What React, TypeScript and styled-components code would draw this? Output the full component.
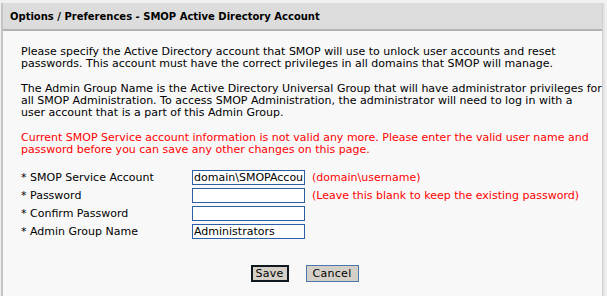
import React from 'react';
import styled, { createGlobalStyle } from 'styled-components';

const GlobalStyle = createGlobalStyle`
  html, body {
    margin: 0;
    padding: 0;
    background: #f0f0f0;
  }
  body {
    font-family: "DejaVu Sans", Verdana, sans-serif;
    font-size: 11px;
  }
`;

const Page = styled.div`
  width: 607px;
  height: 296px;
  box-sizing: border-box;
  padding: 3px 4px 0 1px;
  display: flex;
`;

const Panel = styled.div`
  flex: 1;
  display: flex;
  flex-direction: column;
  background: #f8f8f8;
  border-left: 2px solid #c4c4c4;
  border-right: 1px solid #d0d0d0;
  box-shadow: 2px 0 0 #e4e4e4;
`;

const Header = styled.div`
  height: 28px;
  box-sizing: border-box;
  display: flex;
  align-items: center;
  padding-left: 7px;
  background: #dcdcdc;
  border-bottom: 2px solid #b2b2b2;
  color: #000;
  font-weight: bold;
  font-size: 10px;
`;

const Body = styled.div`
  padding: 15px 0 0 18px;
  color: #000;
`;

const Para = styled.p<{ $alert?: boolean; $gap?: number }>`
  margin: 0 0 ${(p) => p.$gap ?? 13}px 0;
  line-height: 12px;
  white-space: nowrap;
  color: ${(p) => (p.$alert ? '#ff0000' : '#000')};
`;

const FormGrid = styled.div`
  display: grid;
  grid-template-columns: 164px 113px auto;
  column-gap: 7px;
  row-gap: 3px;
  align-items: center;
  margin-top: 14px;
`;

const Label = styled.span`
  line-height: 15px;
  white-space: nowrap;
`;

const Field = styled.input`
  box-sizing: border-box;
  width: 113px;
  height: 15px;
  margin: 0;
  padding: 0 1px;
  border: 1px solid #2c5fa4;
  background: #fff;
  font-family: "DejaVu Sans", Verdana, sans-serif;
  font-size: 11px;
  color: #000;
  outline: none;
`;

const Hint = styled.span`
  color: #ff0000;
  line-height: 15px;
  white-space: nowrap;
`;

const Actions = styled.div`
  display: flex;
  justify-content: center;
  gap: 17px;
  margin-top: 26px;
  padding-right: 14px;
`;

const Button = styled.button<{ $primary?: boolean }>`
  width: ${(p) => (p.$primary ? '38px' : '53px')};
  height: 17px;
  box-sizing: border-box;
  padding: 0;
  background: #d4d0c8;
  border: ${(p) => (p.$primary ? '2px solid #101820' : '1px solid #4a78ad')};
  font-family: "DejaVu Sans", Verdana, sans-serif;
  font-size: 11px;
  color: #000;
  letter-spacing: 0.3px;
  line-height: 13px;
`;

const fields = [
  { label: 'SMOP Service Account', value: 'domain\\SMOPAccount', hint: '(domain\\username)' },
  { label: 'Password', value: '', hint: '(Leave this blank to keep the existing password)', type: 'password' },
  { label: 'Confirm Password', value: '', type: 'password' },
  { label: 'Admin Group Name', value: 'Administrators' },
];

export default function App() {
  return (
    <>
      <GlobalStyle />
      <Page>
        <Panel>
          <Header>Options / Preferences - SMOP Active Directory Account</Header>
          <Body>
            <Para $gap={13}>
              Please specify the Active Directory account that SMOP will use to unlock user accounts and reset
              <br />
              passwords. This account must have the correct privileges in all domains that SMOP will manage.
            </Para>
            <Para $gap={13}>
              The Admin Group Name is the Active Directory Universal Group that will have administrator privileges for
              <br />
              all SMOP Administration. To access SMOP Administration, the administrator will need to log in with a
              <br />
              user account that is a part of this Admin Group.
            </Para>
            <Para $alert $gap={0}>
              Current SMOP Service account information is not valid any more. Please enter the valid user name and
              <br />
              password before you can save any other changes on this page.
            </Para>
            <FormGrid>
              {fields.map((f) => (
                <React.Fragment key={f.label}>
                  <Label>* {f.label}</Label>
                  <Field type={f.type || 'text'} defaultValue={f.value} />
                  <Hint>{f.hint || ''}</Hint>
                </React.Fragment>
              ))}
            </FormGrid>
            <Actions>
              <Button $primary>Save</Button>
              <Button>Cancel</Button>
            </Actions>
          </Body>
        </Panel>
      </Page>
    </>
  );
}
